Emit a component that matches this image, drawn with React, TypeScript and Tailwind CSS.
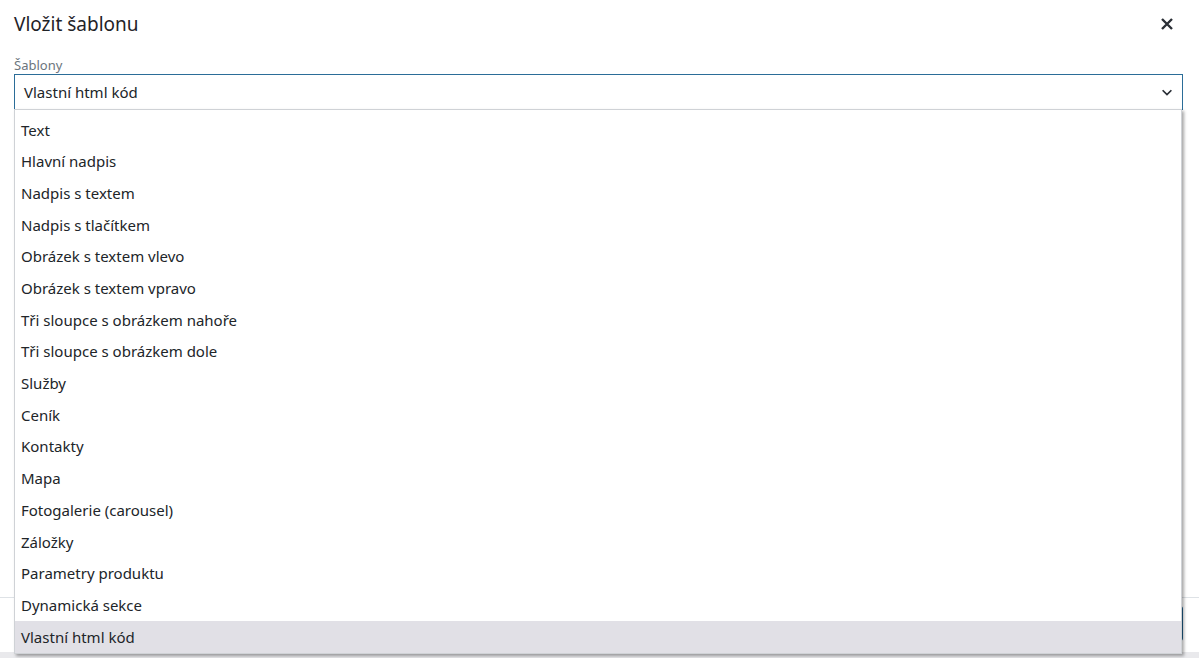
const templates = [
  "Text",
  "Hlavní nadpis",
  "Nadpis s textem",
  "Nadpis s tlačítkem",
  "Obrázek s textem vlevo",
  "Obrázek s textem vpravo",
  "Tři sloupce s obrázkem nahoře",
  "Tři sloupce s obrázkem dole",
  "Služby",
  "Ceník",
  "Kontakty",
  "Mapa",
  "Fotogalerie (carousel)",
  "Záložky",
  "Parametry produktu",
  "Dynamická sekce",
  "Vlastní html kód",
];

export default function App() {
  const selected = "Vlastní html kód";
  return (
    <div className="h-[658px] bg-[#e9e9ec] overflow-hidden font-['Noto_Sans',sans-serif] text-[#212529]">
      <div className="h-[652px] bg-white flex flex-col">
        {/* Header */}
        <div className="flex items-center justify-between pl-[14px] pr-[24px] pt-[2px] h-[46px]">
          <h1 className="text-[19px] text-[#1f2328]">Vložit šablonu</h1>
          <svg className="w-[16px] h-[16px] text-[#2a2f36]" fill="none" stroke="currentColor" strokeWidth="2.4" viewBox="0 0 16 16">
            <path d="M3 3l10 10M13 3L3 13" />
          </svg>
        </div>

        {/* Body */}
        <div className="pl-[14px] pr-[16px] pt-[10px]">
          <label className="block text-[13px] text-[#6c757d] leading-[18px]">Šablony</label>
          <div className="relative">
            <div className="h-[36px] border border-[#2b6d98] flex items-center justify-between pl-[9px] pr-[8px] text-[15px]">
              <span>{selected}</span>
              <svg className="w-[14px] h-[14px] text-[#2a2f36]" fill="none" stroke="currentColor" strokeWidth="2" viewBox="0 0 16 16">
                <path d="M3 6l5 5 5-5" />
              </svg>
            </div>

            {/* Dropdown menu */}
            <div className="absolute z-10 left-0 right-[1px] top-[35px] bg-white border border-[#cfd2d6] shadow-[2px_2px_3px_rgba(0,0,0,0.35)] pt-[4px]">
              {templates.map((t) => (
                <div
                  key={t}
                  className={
                    t === selected
                      ? "h-[31.7px] flex items-center pl-[6px] text-[15px] bg-[#e1e0e6]"
                      : "h-[31.7px] flex items-center pl-[6px] text-[15px]"
                  }
                >
                  {t}
                </div>
              ))}
            </div>
          </div>
        </div>

        <div className="flex-1" />

        {/* Footer */}
        <div className="border-t border-[#dee2e6] h-[55px] flex items-start justify-end pt-[8px] pr-[16px]">
          <button className="h-[35px] px-4 bg-[#1f5f8b] text-white text-[15px] rounded-[3px]">Vložit</button>
        </div>
      </div>
    </div>
  );
}
